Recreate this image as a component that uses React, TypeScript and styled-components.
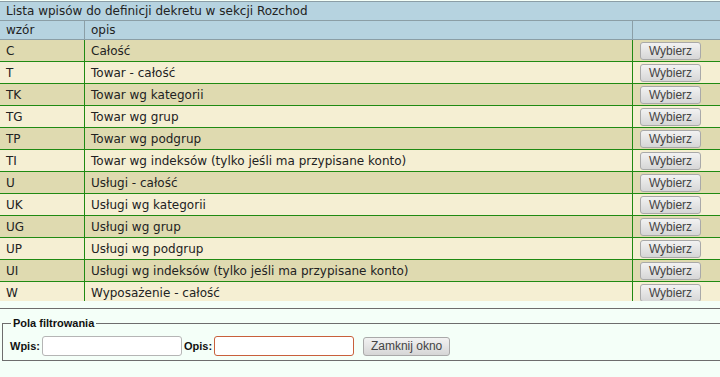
import React from 'react';
import styled, { createGlobalStyle } from 'styled-components';

type Entry = { code: string; label: string };

const entries: Entry[] = [
  { code: 'C', label: 'Całość' },
  { code: 'T', label: 'Towar - całość' },
  { code: 'TK', label: 'Towar wg kategorii' },
  { code: 'TG', label: 'Towar wg grup' },
  { code: 'TP', label: 'Towar wg podgrup' },
  { code: 'TI', label: 'Towar wg indeksów (tylko jeśli ma przypisane konto)' },
  { code: 'U', label: 'Usługi - całość' },
  { code: 'UK', label: 'Usługi wg kategorii' },
  { code: 'UG', label: 'Usługi wg grup' },
  { code: 'UP', label: 'Usługi wg podgrup' },
  { code: 'UI', label: 'Usługi wg indeksów (tylko jeśli ma przypisane konto)' },
  { code: 'W', label: 'Wyposażenie - całość' }
];

const GlobalStyle = createGlobalStyle`
  html, body {
    margin: 0;
    padding: 0;
    background: #f4fff8;
  }
`;

const StyledPage = styled.div`
  width: 720px;
  height: 377px;
  overflow: hidden;
  background: #f4fff8;
`;

const StyledListPane = styled.div`
  height: 301px;
  overflow: hidden;
  padding-top: 1px;
  box-sizing: border-box;
`;

const StyledTable = styled.table`
  width: 100%;
  border-collapse: collapse;
  font-family: 'DejaVu Sans', Verdana, sans-serif;
  font-size: 12px;
  color: #222;
`;

const StyledCaption = styled.th`
  background: #b6d3e0;
  border-top: 1px solid #8b9ea6;
  border-bottom: 1px solid #8b9ea6;
  text-align: left;
  font-weight: normal;
  height: 18px;
  padding: 0 6px;
`;

const StyledHeadCell = styled.th<{ $w?: string }>`
  background: #b6d3e0;
  border-bottom: 1px solid #8b9ea6;
  border-left: 1px solid #8b9ea6;
  text-align: left;
  font-weight: normal;
  height: 18px;
  padding: 0 6px;
  width: ${(p) => p.$w || 'auto'};
  &:first-child {
    border-left: none;
  }
`;

const StyledRow = styled.tr<{ $odd: boolean }>`
  background: ${(p) => (p.$odd ? '#dfdab0' : '#f5efd3')};
`;

const StyledCell = styled.td`
  border-top: 1px solid #1f8a12;
  border-left: 1px solid #1f8a12;
  height: 21px;
  padding: 0 6px;
  &:first-child {
    border-left: none;
  }
`;

const StyledButtonCell = styled(StyledCell)`
  padding: 0 0 0 7px;
`;

const StyledButton = styled.button`
  font-family: 'Liberation Sans', Arial, sans-serif;
  font-size: 12px;
  color: #444;
  height: 18px;
  width: 61px;
  padding: 0;
  border: 1px solid #a9a9a9;
  border-radius: 3px;
  background: linear-gradient(#f2f2f2, #d6d6d6);
  display: block;
`;

const StyledDivider = styled.div`
  margin-top: 7px;
  border-top: 1px solid #6d6d6d;
`;

const StyledFieldset = styled.fieldset`
  margin: 8px 0 0 2px;
  padding: 3px 8px 8px 7px;
  border: 1px solid #6d6d6d;
  border-right: none;
  height: 31px;
  box-sizing: content-box;
  font-family: 'Liberation Sans', Arial, sans-serif;
  font-size: 11px;
`;

const StyledLegend = styled.legend`
  font-weight: bold;
  font-size: 11px;
  color: #111;
  padding: 0 2px;
  margin-left: 1px;
`;

const StyledFilterRow = styled.div`
  display: flex;
  align-items: center;
  margin-top: 4px;
`;

const StyledLabel = styled.label`
  font-weight: bold;
  font-size: 11px;
  color: #111;
  margin-right: 2px;
`;

const StyledInput = styled.input<{ $focused?: boolean }>`
  width: 140px;
  height: 20px;
  box-sizing: border-box;
  border: 1px solid ${(p) => (p.$focused ? '#c8603c' : '#b5b5b5')};
  border-radius: 3px;
  background: #fff;
  margin-right: 2px;
  padding: 0 2px;
  outline: none;
  font-family: 'Liberation Sans', Arial, sans-serif;
  font-size: 12px;
`;

const StyledCloseButton = styled(StyledButton)`
  width: 87px;
  height: 19px;
  margin-left: 7px;
  font-size: 12px;
`;

const App: React.FC = () => {
  return (
    <StyledPage>
      <GlobalStyle />
      <StyledListPane>
        <StyledTable>
          <thead>
            <tr>
              <StyledCaption colSpan={3}>Lista wpisów do definicji dekretu w sekcji Rozchod</StyledCaption>
            </tr>
            <tr>
              <StyledHeadCell $w="72px">wzór</StyledHeadCell>
              <StyledHeadCell>opis</StyledHeadCell>
              <StyledHeadCell $w="75px"></StyledHeadCell>
            </tr>
          </thead>
          <tbody>
            {entries.map((e, i) => (
              <StyledRow key={e.code} $odd={i % 2 === 0}>
                <StyledCell>{e.code}</StyledCell>
                <StyledCell>{e.label}</StyledCell>
                <StyledButtonCell>
                  <StyledButton>Wybierz</StyledButton>
                </StyledButtonCell>
              </StyledRow>
            ))}
          </tbody>
        </StyledTable>
      </StyledListPane>
      <StyledDivider />
      <StyledFieldset>
        <StyledLegend>Pola filtrowania</StyledLegend>
        <StyledFilterRow>
          <StyledLabel>Wpis:</StyledLabel>
          <StyledInput />
          <StyledLabel>Opis:</StyledLabel>
          <StyledInput $focused autoFocus />
          <StyledCloseButton>Zamknij okno</StyledCloseButton>
        </StyledFilterRow>
      </StyledFieldset>
    </StyledPage>
  );
};

export default App;
